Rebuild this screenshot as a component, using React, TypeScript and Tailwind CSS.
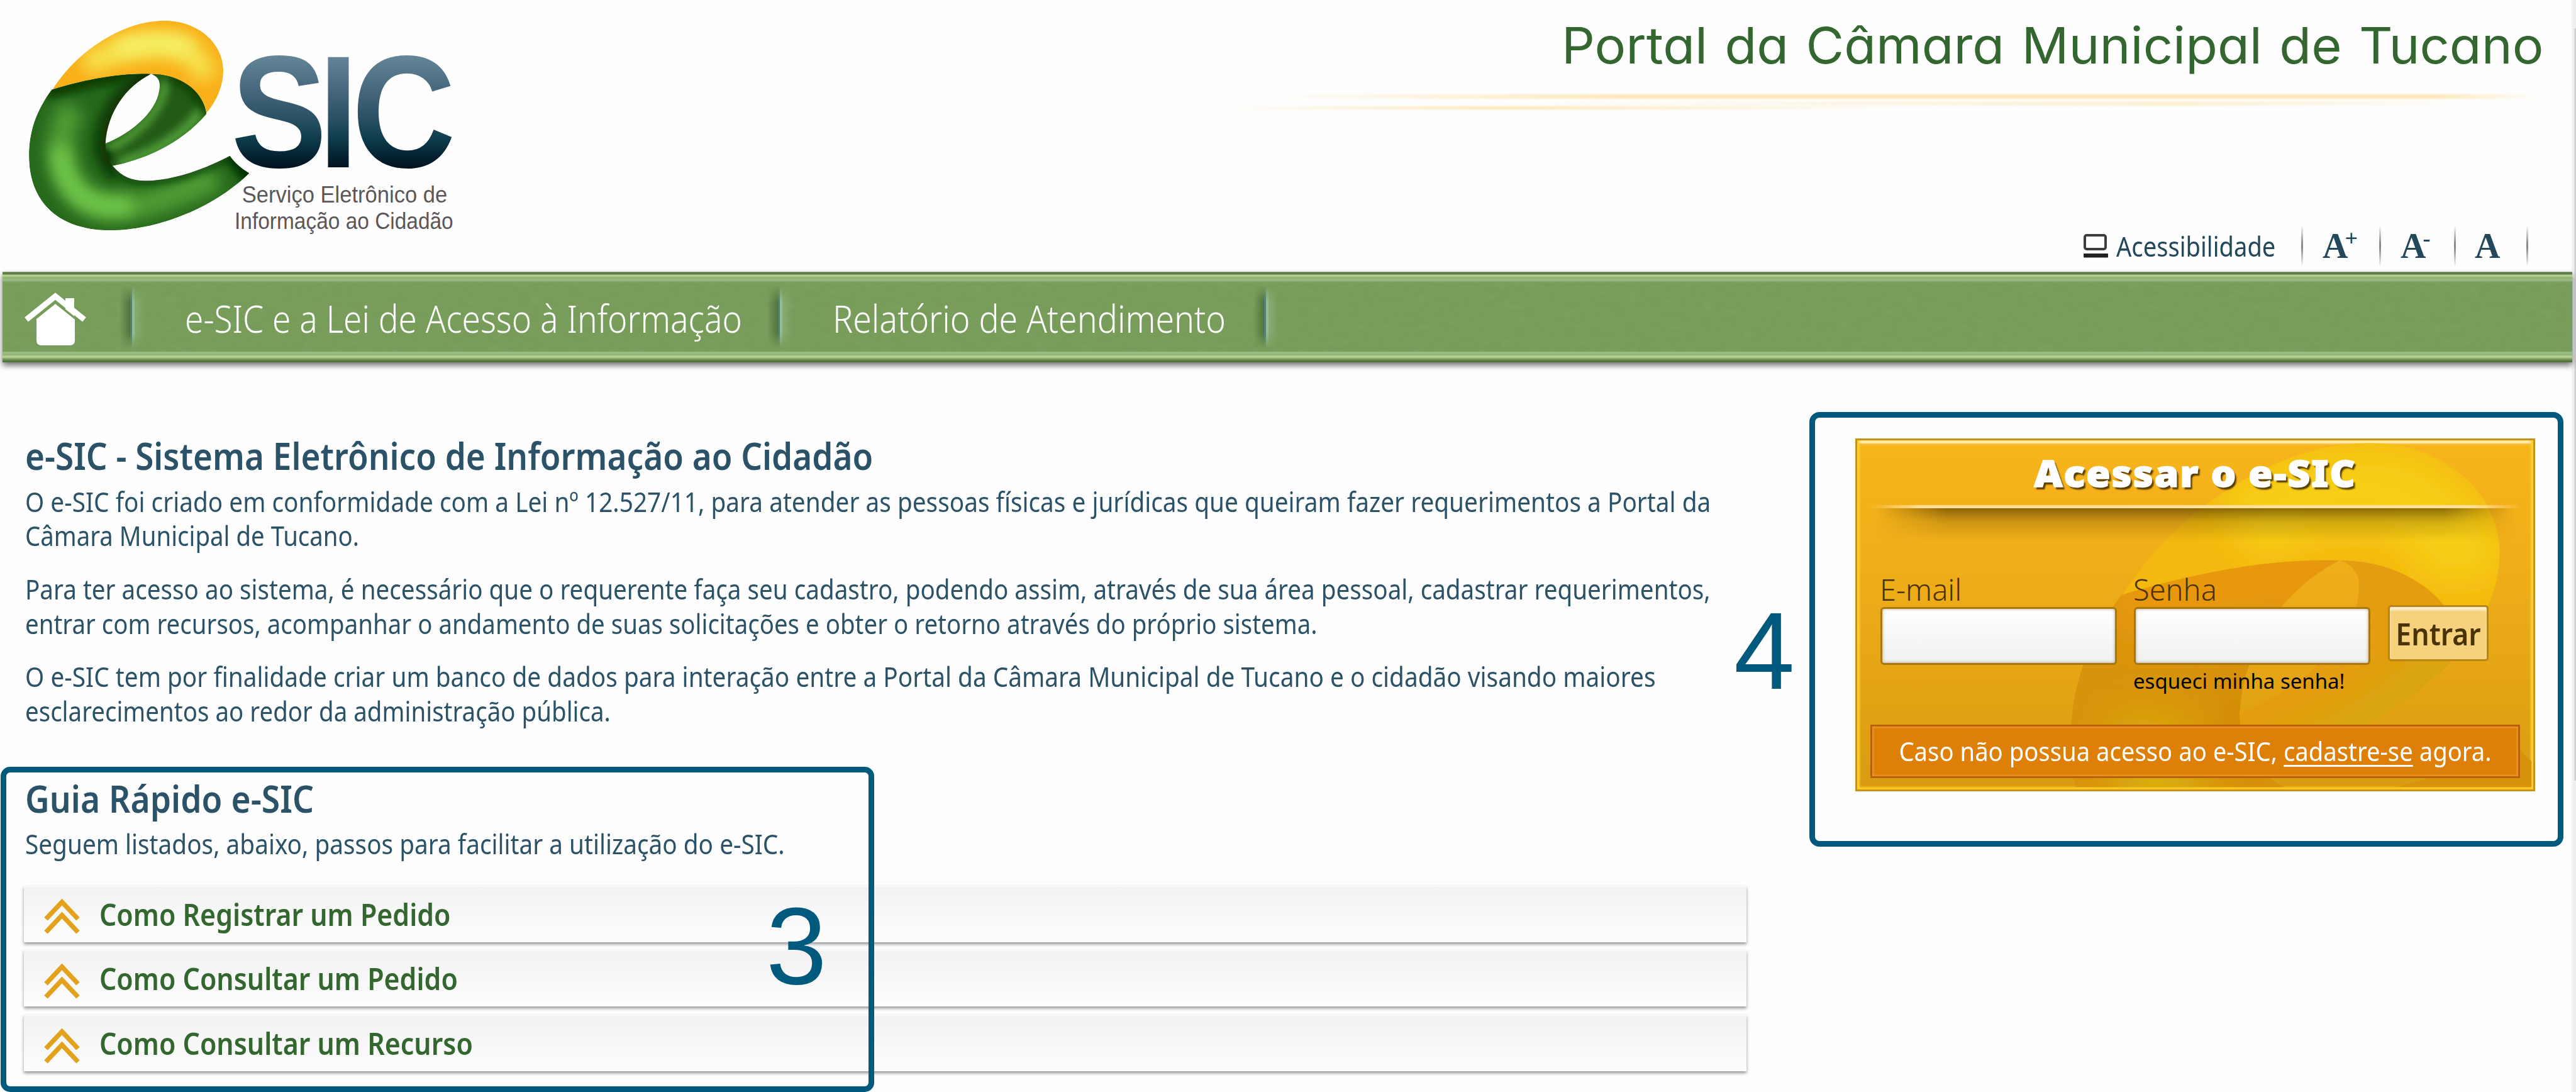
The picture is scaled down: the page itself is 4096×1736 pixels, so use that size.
import type { ReactNode } from "react";

const FONT = "font-['Noto_Sans','Open_Sans',sans-serif]";

const INTRO: { text: string; scale: string }[][] = [
  [
    {
      text: "O e-SIC foi criado em conformidade com a Lei nº 12.527/11, para atender as pessoas físicas e jurídicas que queiram fazer requerimentos a Portal da",
      scale: "scale-x-[0.9015]",
    },
    { text: "Câmara Municipal de Tucano.", scale: "scale-x-[0.893]" },
  ],
  [
    {
      text: "Para ter acesso ao sistema, é necessário que o requerente faça seu cadastro, podendo assim, através de sua área pessoal, cadastrar requerimentos,",
      scale: "scale-x-[0.898]",
    },
    {
      text: "entrar com recursos, acompanhar o andamento de suas solicitações e obter o retorno através do próprio sistema.",
      scale: "scale-x-[0.894]",
    },
  ],
  [
    {
      text: "O e-SIC tem por finalidade criar um banco de dados para interação entre a Portal da Câmara Municipal de Tucano e o cidadão visando maiores",
      scale: "scale-x-[0.902]",
    },
    { text: "esclarecimentos ao redor da administração pública.", scale: "scale-x-[0.895]" },
  ],
];

const STEPS = ["Como Registrar um Pedido", "Como Consultar um Pedido", "Como Consultar um Recurso"];

const CAP =
  "M225,525 C330,360 480,235 640,155 C760,95 870,75 960,75 C1180,75 1345,225 1345,400 C1345,500 1305,600 1235,680 C1215,550 1090,448 930,428 C700,405 420,467 225,525 Z";
const BODY =
  "M220,528 C420,465 620,420 870,424 C700,510 585,680 572,880 C572,940 590,995 620,1030 C680,1100 750,1125 830,1125 C1000,1125 1200,1060 1388,962 C1420,1010 1470,1050 1515,1075 C1300,1290 930,1450 600,1450 C280,1450 70,1280 70,960 C70,800 120,660 220,528 Z";
const BAR =
  "M870,424 C925,445 932,480 925,530 C905,680 730,820 572,880 C530,900 520,980 590,1030 L620,1028 C850,980 1080,870 1235,685 C1215,550 1090,440 930,422 Z";

function Logo() {
  return (
    <svg className="h-[422px] w-[800px]" viewBox="0 0 1100 580" role="img" aria-label="e-SIC">
      <defs>
        <filter id="soft" filterUnits="userSpaceOnUse" x="-200" y="-200" width="2000" height="2000">
          <feGaussianBlur stdDeviation="50" />
        </filter>
        <filter id="soft2" filterUnits="userSpaceOnUse" x="-200" y="-200" width="2000" height="2000">
          <feGaussianBlur stdDeviation="26" />
        </filter>
        <clipPath id="cCap">
          <path d={CAP} />
        </clipPath>
        <clipPath id="cBody">
          <path d={BODY} />
        </clipPath>
        <clipPath id="cBar">
          <path d={BAR} />
        </clipPath>
        <linearGradient id="steel" gradientUnits="userSpaceOnUse" x1="0" y1="116" x2="0" y2="375">
          <stop offset="0" stopColor="#678899" />
          <stop offset="0.3" stopColor="#48687d" />
          <stop offset="0.55" stopColor="#2a5163" />
          <stop offset="0.72" stopColor="#0e3d4c" />
          <stop offset="0.88" stopColor="#04202f" />
          <stop offset="1" stopColor="#000c1a" />
        </linearGradient>
      </defs>
      <g transform="translate(40 20) scale(0.3333)">
        <g clipPath="url(#cBar)">
          <path d={BAR} fill="#235a17" />
          <path d="M960,470 C960,650 780,830 560,930" fill="none" stroke="#4f9a36" strokeWidth="60" filter="url(#soft2)" />
          <path d="M1220,640 C1100,830 860,960 660,1010" fill="none" stroke="#509c37" strokeWidth="70" filter="url(#soft2)" />
          <path d="M1000,440 C1120,480 1200,560 1240,690" fill="none" stroke="#0c3f06" strokeWidth="70" filter="url(#soft2)" />
          <circle cx="560" cy="965" r="55" fill="#002c00" filter="url(#soft2)" />
        </g>
        <g clipPath="url(#cBody)">
          <path d={BODY} fill="#27681c" />
          <path
            d="M360,640 C260,800 240,1020 380,1190 C480,1330 700,1320 900,1260 C1050,1210 1200,1150 1300,1100"
            fill="none"
            stroke="#4f9c36"
            strokeWidth="170"
            filter="url(#soft)"
          />
          <path d="M280,900 C270,1080 350,1200 470,1260 C560,1300 640,1300 740,1280" fill="none" stroke="#72ca4b" strokeWidth="120" filter="url(#soft)" />
          <path d="M180,540 C420,470 620,420 900,424" fill="none" stroke="#0a3d05" strokeWidth="110" filter="url(#soft2)" />
          <path d="M800,424 C640,520 530,680 510,880 C510,960 560,1050 640,1110" fill="none" stroke="#154d0d" strokeWidth="60" filter="url(#soft2)" />
          <path d="M870,424 C690,520 580,680 560,880 C560,960 590,1010 640,1060" fill="none" stroke="#0c2c06" strokeWidth="56" filter="url(#soft2)" />
          <path d="M600,1020 C680,1100 750,1125 830,1125 C1000,1125 1200,1060 1388,962" fill="none" stroke="#0f4509" strokeWidth="44" filter="url(#soft2)" />
          <path d="M1400,940 L1530,1110" fill="none" stroke="#003300" strokeWidth="120" filter="url(#soft2)" />
        </g>
        <g clipPath="url(#cCap)">
          <path d={CAP} fill="#f9b019" />
          <path d="M440,370 C640,260 860,230 1020,250 C1140,280 1200,340 1230,450" fill="none" stroke="#f6e14e" strokeWidth="150" filter="url(#soft)" />
          <path d="M640,265 C800,200 1010,190 1140,270" fill="none" stroke="#f5f168" strokeWidth="110" filter="url(#soft)" />
        </g>
      </g>
      <text
        transform="scale(0.9 1)"
        x="561.4 773.5 855"
        y="366"
        fill="url(#steel)"
        className="font-['Liberation_Sans',Arial,sans-serif] text-[349px] font-bold"
      >
        SIC
      </text>
      <text
        x="529"
        y="442"
        textLength="449"
        lengthAdjust="spacingAndGlyphs"
        fill="#5b5759"
        className="font-['Liberation_Sans',Arial,sans-serif] text-[52px]"
      >
        Serviço Eletrônico de
      </text>
      <text
        x="513"
        y="501"
        textLength="478"
        lengthAdjust="spacingAndGlyphs"
        fill="#5b5759"
        className="font-['Liberation_Sans',Arial,sans-serif] text-[52px]"
      >
        Informação ao Cidadão
      </text>
    </svg>
  );
}

function SizeCell({ mark }: { mark: string }) {
  return (
    <span className="flex items-start font-['Liberation_Serif',serif] text-[56px] leading-[66px] font-bold text-[#23485a]">
      A<span className="mt-[3px] -ml-[5px] text-[36px] leading-[36px]">{mark}</span>
    </span>
  );
}

function Rule() {
  return <span className="h-[66px] w-[3px] shrink-0 bg-[linear-gradient(to_bottom,transparent,#8a8a8a_45%,#8a8a8a_55%,transparent)]" />;
}

function Header() {
  return (
    <header className="flex h-[432px]">
      <div className="w-[1946px] shrink-0">
        <Logo />
      </div>
      <div className="flex w-[2150px] flex-col pt-[24px]">
        <h1 className="ml-[537px] origin-left scale-x-[1.037] font-['Inter',sans-serif] text-[80px] leading-[96px] font-normal whitespace-nowrap text-[#33672f] [font-feature-settings:'cv11'] [word-spacing:4px]">
          Portal da Câmara Municipal de Tucano
        </h1>
        <div className="mt-[30px] ml-[70px] h-[7px] w-[2020px] bg-[linear-gradient(to_right,transparent,#fce7b8_28%,#fce7b8_92%,transparent)] blur-[1.5px]" />
        <div className="mt-[4px] ml-[436px] h-[7px] w-[1548px] bg-[linear-gradient(to_right,transparent,#fcefd2_70%,transparent)] blur-[1.5px]" />
        <div className="mt-[1px] h-[5px] w-[1069px] bg-[linear-gradient(to_right,transparent,#fce5b2_42%,transparent)] blur-[1.5px]" />
        <div className="mt-auto mb-[8px] ml-[1367px] flex h-[66px] items-center">
          <svg className="mt-[-1px] h-[38px] w-[39px]" viewBox="0 0 39 38">
            <rect x="2" y="2" width="33" height="22" rx="3" fill="none" stroke="#3c3c3c" strokeWidth="4" />
            <rect x="0" y="31" width="39" height="6.500" rx="1" fill="#222" />
          </svg>
          <span className="ml-[13px] w-[294px] origin-left scale-x-[0.887] pt-[2px] text-[43px] leading-[62px] whitespace-nowrap text-[#23485a]">
            Acessibilidade
          </span>
          <Rule />
          <span className="flex w-[121px] pl-[31px]">
            <SizeCell mark="+" />
          </span>
          <Rule />
          <span className="flex w-[116px] pl-[31px]">
            <SizeCell mark="-" />
          </span>
          <Rule />
          <span className="flex w-[112px] pl-[30px]">
            <SizeCell mark="" />
          </span>
          <Rule />
        </div>
      </div>
    </header>
  );
}

function NavDivider() {
  return (
    <span className="flex h-[99px] w-[40px] shrink-0 [mask-image:linear-gradient(to_bottom,transparent,#000_25%,#000_75%,transparent)]">
      <span className="w-[17px] bg-[linear-gradient(to_right,transparent,rgba(50,80,40,0.55))]" />
      <span className="w-[3px] bg-[#4f8078]" />
      <span className="w-[4px] bg-[#94bb92]" />
      <span className="w-[16px] bg-[linear-gradient(to_right,rgba(148,190,140,0.5),transparent)]" />
    </span>
  );
}

function NavLink({ children, cls }: { children: ReactNode; cls: string }) {
  return <a className={`block origin-left pt-[4px] text-[60px] leading-[84px] font-light whitespace-nowrap text-white ${cls}`}>{children}</a>;
}

function Nav() {
  return (
    <nav className="relative ml-[4px] h-[144px] w-[4086px] bg-[linear-gradient(to_bottom,#8fa682_0px,#54743f_2px,#64864c_4px,#b8cf97_5.5px,#aec98a_7.5px,#90b56e_9px,#90b56e_10.5px,#9fbe89_12px,#9bbb84_13.5px,#769c58_17px,#769c58_126px,#9dbd88_128.5px,#98b982_130px,#8fb46b_132px,#b7cf96_134px,#b7cf96_136px,#85a862_138px,#6d9150_140px,#54743f_142px,#4f6f3d_144px)] shadow-[0_5px_9px_rgba(0,0,0,0.55)]">
      <svg className="absolute inset-x-0 top-[16px] h-[112px] w-full opacity-[0.06]" preserveAspectRatio="none">
        <filter id="grain">
          <feTurbulence type="fractalNoise" baseFrequency="0.05 0.09" numOctaves="3" seed="4" />
          <feColorMatrix type="saturate" values="0" />
        </filter>
        <rect width="100%" height="100%" filter="url(#grain)" />
      </svg>
      <div className="relative flex h-full items-center">
        <svg className="mt-[6px] ml-[35px] h-[84px] w-[98px] shrink-0" viewBox="0 0 98 84">
          <path d="M65 9h14v30H65z" fill="#fff" />
          <path d="M3 43L49 6l46 37" fill="none" stroke="#fff" strokeWidth="9" />
          <path d="M19 40L49 17l31 23v36q0 8-8 8H27q-8 0-8-8z" fill="#fff" />
          <path d="M10 47L49 16l39 31" fill="none" stroke="#769c58" strokeWidth="3.500" />
        </svg>
        <span className="ml-[53px] flex">
          <NavDivider />
        </span>
        <span className="ml-[64px] w-[926px]">
          <NavLink cls="scale-x-[0.887]">e-SIC e a Lei de Acesso à Informação</NavLink>
        </span>
        <span className="flex">
          <NavDivider />
        </span>
        <span className="ml-[64px] w-[669px]">
          <NavLink cls="scale-x-[0.895]">Relatório de Atendimento</NavLink>
        </span>
        <NavDivider />
      </div>
    </nav>
  );
}

function Step({ label }: { label: string }) {
  return (
    <li className="-ml-[2px] flex h-[90px] w-[2739px] items-center border-t-2 border-[#fafafa] bg-[linear-gradient(to_bottom,#f2f2f2,#fdfdfd)] pl-[32px] shadow-[0_3px_5px_rgba(0,0,0,0.42)]">
      <svg className="mt-[8px] h-[57px] w-[57px] shrink-0" viewBox="0 0 57 57">
        <path d="M3 32L28.500 5L54 32M3 53L28.500 26L54 53" fill="none" stroke="#e3a11c" strokeWidth="7.500" />
      </svg>
      <span className="ml-[31px] block origin-left scale-x-[0.893] pb-[1px] text-[48px] leading-[85px] font-semibold whitespace-nowrap text-[#33672f]">
        {label}
      </span>
    </li>
  );
}

function Watermark() {
  return (
    <svg className="absolute inset-[3px] h-[548px] w-[1069px]" viewBox="6 6 1069 548">
      <defs>
        <filter id="wm" filterUnits="userSpaceOnUse" x="-300" y="-300" width="2200" height="2200">
          <feGaussianBlur stdDeviation="60" />
        </filter>
        <clipPath id="wBody">
          <path d={BODY} />
        </clipPath>
        <clipPath id="wBar">
          <path d={BAR} />
        </clipPath>
        <clipPath id="wCap">
          <path d={CAP} />
        </clipPath>
      </defs>
      <g transform="translate(305 -33) scale(0.535)">
        <g clipPath="url(#wBar)">
          <path d={BAR} fill="#e49c10" />
          <path d="M1220,640 C1100,830 860,960 660,1010" fill="none" stroke="#d5a80e" strokeWidth="120" filter="url(#wm)" />
        </g>
        <g clipPath="url(#wBody)">
          <path d={BODY} fill="#d8930c" />
          <path d="M180,540 C420,470 620,420 900,424" fill="none" stroke="#e8980f" strokeWidth="300" filter="url(#wm)" />
          <path d="M320,900 C280,1080 350,1200 470,1250" fill="none" stroke="#d8ae0c" strokeWidth="220" filter="url(#wm)" />
          <path d="M600,800 C560,960 590,1010 640,1060" fill="none" stroke="#d08207" strokeWidth="70" filter="url(#wm)" />
        </g>
        <g clipPath="url(#wCap)">
          <path d={CAP} fill="#f4b910" />
          <path d="M560,330 C700,230 900,200 1050,230 C1180,300 1230,380 1240,480" fill="none" stroke="#f7cf16" strokeWidth="240" filter="url(#wm)" />
        </g>
      </g>
    </svg>
  );
}

function Field({ label, cls }: { label: string; cls: string }) {
  return (
    <label className={`flex w-[376px] flex-col ${cls}`}>
      <span className="-ml-[1px] text-[47px] leading-[56px] font-light text-[#4a3305]">{label}</span>
      <input className="h-[92px] w-[376px] rounded-[6px] border-[3px] border-[#a8780f] bg-[linear-gradient(to_bottom,#ffffff,#f0f0f0)] shadow-[inset_0_0_5px_rgba(120,90,20,0.5)]" />
    </label>
  );
}

function Login() {
  return (
    <aside className="relative mt-[121px] ml-[171px] h-[561px] w-[1081px] shrink-0 border-[3px] border-[#c8911a] bg-[linear-gradient(to_bottom,#f8b41b,#f0ae19_35%,#d99b11)] shadow-[inset_4px_0_3px_#fdd22e,inset_-4px_0_3px_#fdd22e,inset_0_-4px_3px_#fdc61e,inset_0_5px_3px_#fff0c8]">
      <Watermark />
      <div className="relative flex h-full flex-col">
        <h2 className="mt-[17px] origin-center scale-x-[1.08] text-center text-[58px] leading-[70px] font-black tracking-[1.6px] text-white [-webkit-text-stroke:1.5px_white] [text-shadow:3px_4px_2px_rgba(60,40,0,0.85)]">
          Acessar o e-SIC
        </h2>
        <div className="mx-[18px] mt-[16px] h-[5px] bg-[linear-gradient(to_right,transparent,#ffdf94_8%,#ffe09a_92%,transparent)]" />
        <div className="mx-[18px] h-[52px] bg-[linear-gradient(to_bottom,rgba(90,65,0,0.68),rgba(90,65,0,0.25)_40%,transparent)] [mask-image:linear-gradient(to_right,transparent_1%,#000_12%,#000_88%,transparent_99%)]" />
        <div className="mt-[49px] flex pl-[37px]">
          <Field label="E-mail" cls="" />
          <div className="ml-[27px] flex flex-col">
            <Field label="Senha" cls="" />
            <a className="mt-[6px] -ml-[1px] block w-[376px] text-[33px] leading-[40px] whitespace-nowrap text-black">esqueci minha senha!</a>
          </div>
          <button className="mt-[53px] ml-[28px] h-[89px] w-[160px] rounded-[5px] border-[3px] border-[#b98418] bg-[#f6d27c] shadow-[inset_0_5px_3px_rgba(255,255,255,0.65)]">
            <span className="-mx-[10px] block scale-x-[0.91] text-center text-[49px] leading-[80px] font-semibold text-[#4a3305]">Entrar</span>
          </button>
        </div>
        <div className="mx-[21px] mt-auto mb-[18px] h-[85px] border-[3px] border-[#b9600a] bg-[#de8007] text-center shadow-[inset_0_0_3px_2px_rgba(255,190,90,0.4)]">
          <p className="-mx-[60px] scale-x-[0.933] text-[41px] leading-[78px] whitespace-nowrap text-white">
            Caso não possua acesso ao e-SIC, <a className="underline decoration-[3px] underline-offset-[6px]">cadastre-se</a> agora.
          </p>
        </div>
      </div>
    </aside>
  );
}

export default function App() {
  return (
    <div className={`relative h-[1736px] w-[4096px] overflow-hidden bg-[#fefefe] ${FONT}`}>
      <div className="absolute top-0 right-0 h-full w-[8px] bg-[linear-gradient(to_right,#fcfcfc,#efefef_3px)]">
        <div className="mt-[45px] ml-auto h-[1196px] w-[3px] bg-[linear-gradient(to_right,#dedede,#cbcbcb)]" />
      </div>
      <Header />
      <Nav />
      <main className="flex pl-[40px]">
        <section className="w-[2739px] shrink-0 pt-[112px] text-[#2b5266]">
          <h2 className="origin-left scale-x-[0.884] text-[60px] leading-[72px] font-semibold whitespace-nowrap">
            e-SIC - Sistema Eletrônico de Informação ao Cidadão
          </h2>
          <div className="mt-[11px] flex flex-col gap-[30.4px]">
            {INTRO.map((lines, i) => (
              <p key={i} className="text-[43px] leading-[54.4px] whitespace-nowrap">
                {lines.map((l) => (
                  <span key={l.text} className={`block origin-left ${l.scale}`}>
                    {l.text}
                  </span>
                ))}
              </p>
            ))}
          </div>
          <h2 className="mt-[75px] origin-left scale-x-[0.89] text-[60px] leading-[72px] font-semibold whitespace-nowrap">Guia Rápido e-SIC</h2>
          <p className="mt-[10px] origin-left scale-x-[0.901] text-[43px] leading-[54.4px] whitespace-nowrap">
            Seguem listados, abaixo, passos para facilitar a utilização do e-SIC.
          </p>
          <ul className="mt-[38px] flex flex-col gap-[12.8px]">
            {STEPS.map((s) => (
              <Step key={s} label={s} />
            ))}
          </ul>
        </section>
        <Login />
      </main>

      <div className="absolute top-[1219px] left-[1px] h-[517px] w-[1389px] rounded-[15px] border-[9px] border-[#005a7d]" />
      <div className="absolute top-[1417px] left-[1218px] font-['Liberation_Sans',Arial,sans-serif] text-[174px] leading-[174px] text-[#005a7d]">3</div>
      <div className="absolute top-[655px] left-[2877px] h-[691px] w-[1199px] rounded-[16px] border-[9px] border-[#005a7d]" />
      <div className="absolute top-[948px] left-[2757px] font-['Liberation_Sans',Arial,sans-serif] text-[174px] leading-[174px] text-[#005a7d]">4</div>
    </div>
  );
}
